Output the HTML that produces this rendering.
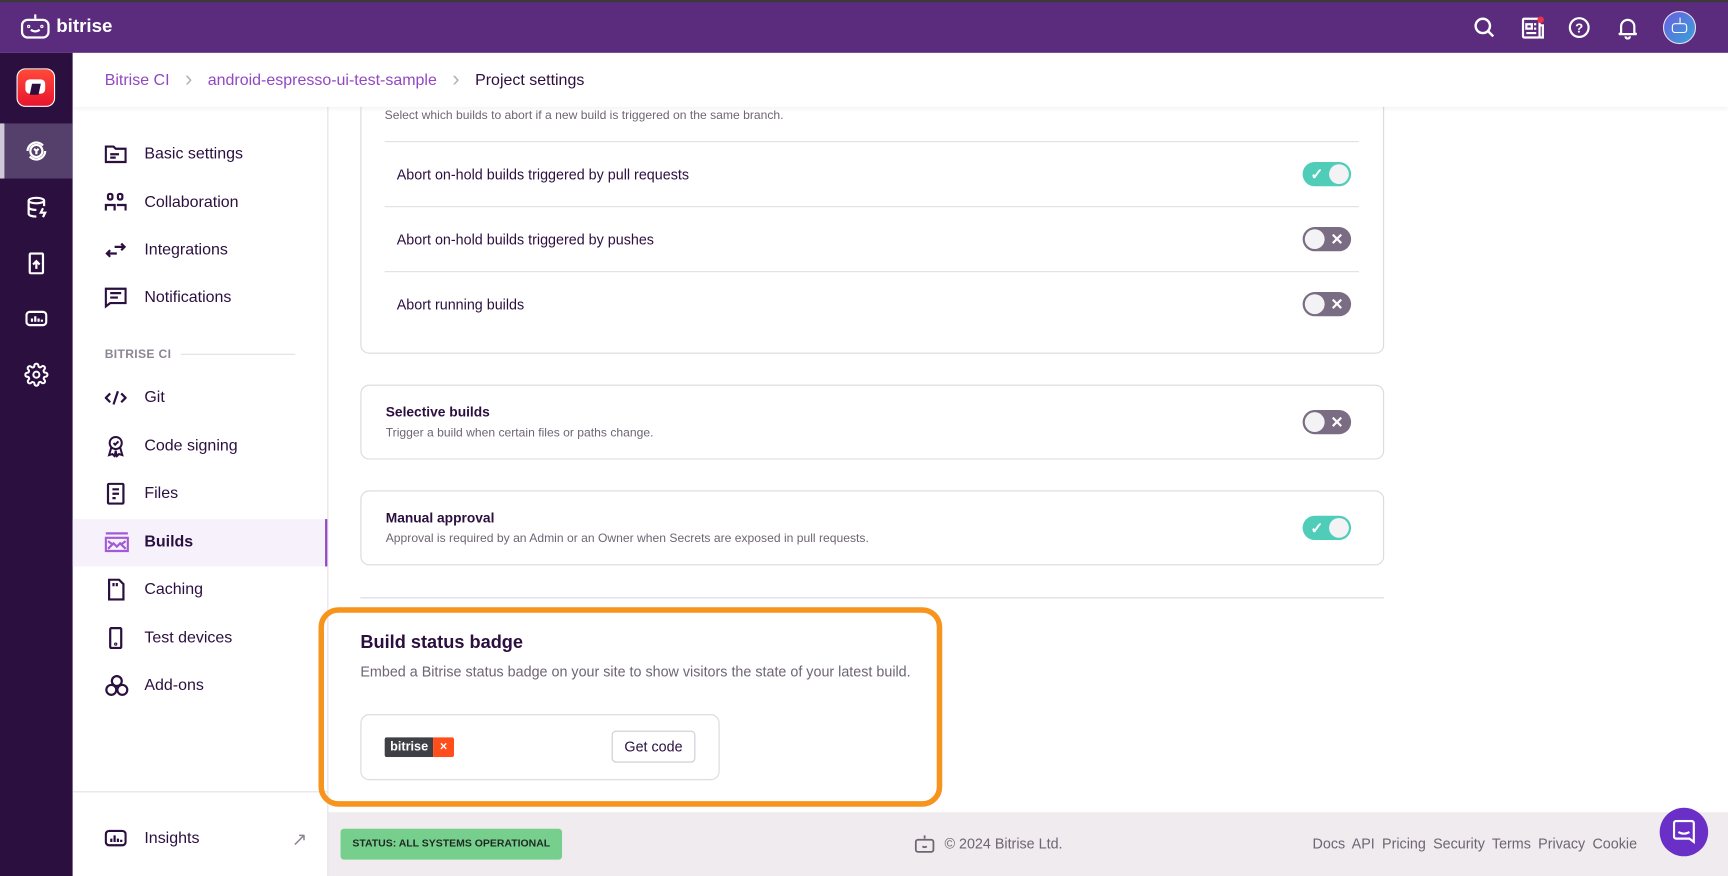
<!DOCTYPE html>
<html><head><meta charset="utf-8"><style>
*{box-sizing:border-box;margin:0;padding:0}
html,body{width:1728px;height:876px;overflow:hidden;background:#fff}
#w{position:absolute;left:0;top:0;width:1568px;height:795px;transform:scale(1.10204);transform-origin:0 0;font-family:"Liberation Sans",sans-serif;color:#2b0f3f}
.a{position:absolute}
.top{left:0;top:0;width:1568px;height:48px;background:#5b2b7e;border-top:2px solid #3a3a3a}
.rail{left:0;top:48px;width:66px;height:747px;background:#2b0f3f}
.crumb{left:66px;top:48px;width:1502px;height:49px;background:#fff;box-shadow:0 2px 4px rgba(0,0,0,.06);font-size:14.5px;line-height:49px;padding-left:29px;z-index:2}
.side{left:66px;top:97px;width:232px;height:698px;border-right:1px solid #e4e0e6;background:#fff}
.it{position:absolute;left:0;width:231px;height:43px;font-size:14.5px;line-height:43px;padding-left:65px;color:#2b0f3f}
.it svg{position:absolute;left:29px;top:11px}
.card{position:absolute;left:327px;width:929px;border:1px solid #dcd8de;border-radius:8px;background:#fff}
.row{position:absolute;left:349px;width:884px;height:59px;border-top:1px solid #e2dfe4;font-size:13px;line-height:59px;padding-left:11px}
.tg{position:absolute;width:44px;height:22px;border-radius:11px}
.on{background:#4fcdb9}.off{background:#7a6c82}
.tg i{position:absolute;top:2px;width:18px;height:18px;border-radius:50%;background:#f3f2f4}
.on i{right:2px}.off i{left:2px}
.tg b{position:absolute;top:0;color:#fff;font-size:14px;line-height:22px;font-weight:bold}
.on b{left:7px}.off b{right:7px}
.ct{position:absolute;left:22px;font-size:12.5px;font-weight:bold}
.cd{position:absolute;left:22px;font-size:11px;color:#6e6573}
.sep{color:#b5b0b8;margin:0 14px;font-size:20px;vertical-align:-1px}
</style></head><body><div id="w">
<div class="a top"></div>
<svg class="a" style="left:18px;top:12px" width="28" height="24" viewBox="0 0 28 24" fill="none" stroke="#fff" stroke-width="2"><rect x="2" y="6" width="24" height="16" rx="5"/><line x1="14" y1="1" x2="14" y2="5"/><path d="M10 15q4 3 8 0" /><circle cx="8" cy="12" r=".5"/><circle cx="20" cy="12" r=".5"/></svg>
<div class="a" style="left:51px;top:14px;color:#fff;font-weight:bold;font-size:17px">bitrise</div>
<svg class="a" style="left:1337px;top:15px" width="20" height="20" viewBox="0 0 20 20" fill="none" stroke="#fff" stroke-width="2.2"><circle cx="8.5" cy="8.5" r="6.5"/><line x1="13.5" y1="13.5" x2="18" y2="18"/></svg>
<svg class="a" style="left:1380px;top:14px" width="22" height="22" viewBox="0 0 22 22" fill="none" stroke="#fff" stroke-width="2"><rect x="2" y="3" width="15" height="17" rx="1"/><path d="M17 9h3v11h-3M5 8h5v4H5zM12 8h2M12 12h2M5 16h9"/><circle cx="18" cy="4" r="3" fill="#e8334a" stroke="none"/></svg>
<svg class="a" style="left:1423px;top:15px" width="20" height="20" viewBox="0 0 20 20" fill="none" stroke="#fff" stroke-width="2"><circle cx="10" cy="10" r="8.5"/><text x="10" y="14.5" text-anchor="middle" fill="#fff" stroke="none" font-size="12" font-weight="bold" font-family="Liberation Sans">?</text></svg>
<svg class="a" style="left:1467px;top:14px" width="20" height="22" viewBox="0 0 20 22" fill="none" stroke="#fff" stroke-width="2"><path d="M4 16V10a6 6 0 0 1 12 0v6l2 1H2z"/><path d="M8 19a2 2 0 0 0 4 0"/></svg>
<div class="a" style="left:1509px;top:10px;width:30px;height:30px;border-radius:50%;background:linear-gradient(135deg,#6a5ee0,#38a3d8);border:1.5px solid #e6e0f0"><div style="position:absolute;left:7px;top:10px;width:14px;height:9px;border:1.5px solid #fff;border-radius:3px"></div><div style="position:absolute;left:13.5px;top:5px;width:1.5px;height:5px;background:#fff"></div></div>
<div class="a rail"></div>
<div class="a" style="left:15px;top:62px;width:35px;height:35px;border-radius:8px;background:linear-gradient(#ff4a3a,#e8152e);border:1.5px solid #fff"><div style="position:absolute;left:7px;top:9px;width:18px;height:13px;background:#fff;border-radius:4px"></div><div style="position:absolute;left:12px;top:13px;width:8px;height:10px;background:#2b0f3f;transform:skewX(-12deg)"></div></div>
<div class="a" style="left:0;top:112px;width:66px;height:50px;background:#54406a;border-left:4px solid #d0c8d8"></div>
<svg class="a" style="left:23px;top:127px" width="20" height="20" viewBox="0 0 20 20" fill="none" stroke="#fff" stroke-width="2"><circle cx="10" cy="10" r="5.5"/><path d="M2 10a8 8 0 0 1 14-5M18 10a8 8 0 0 1-14 5M8 8l2 2 2-2M10 10v3"/></svg>
<svg class="a" style="left:24px;top:178px" width="20" height="20" viewBox="0 0 20 20" fill="none" stroke="#fff" stroke-width="2"><ellipse cx="9" cy="4" rx="7" ry="2.5"/><path d="M2 4v12c0 1.5 3 2.5 7 2.5M16 4v5M2 10c0 1.5 3 2.5 7 2.5"/><path d="M15 11l-2 4h4l-2 4" /></svg>
<svg class="a" style="left:25px;top:229px" width="16" height="20" viewBox="0 0 16 20" fill="none" stroke="#fff" stroke-width="2"><rect x="2" y="1" width="12" height="18" rx="1"/><path d="M8 15V8M5 11l3-3 3 3"/></svg>
<svg class="a" style="left:23px;top:281px" width="20" height="16" viewBox="0 0 20 16" fill="none" stroke="#fff" stroke-width="2"><rect x="1" y="2" width="18" height="12" rx="3"/><path d="M6 11V8M9 11V6M12 11V8M15 11V9"/></svg>
<svg class="a" style="left:22px;top:329px" width="22" height="22" viewBox="0 0 24 24" fill="none" stroke="#fff" stroke-width="2"><circle cx="12" cy="12" r="3"/><path d="M19.4 15a1.7 1.7 0 0 0 .3 1.8l.1.1a2 2 0 1 1-2.8 2.8l-.1-.1a1.7 1.7 0 0 0-1.8-.3 1.7 1.7 0 0 0-1 1.5V21a2 2 0 1 1-4 0v-.1a1.7 1.7 0 0 0-1.1-1.5 1.7 1.7 0 0 0-1.8.3l-.1.1a2 2 0 1 1-2.8-2.8l.1-.1a1.7 1.7 0 0 0 .3-1.8 1.7 1.7 0 0 0-1.5-1H3a2 2 0 1 1 0-4h.1a1.7 1.7 0 0 0 1.5-1.1 1.7 1.7 0 0 0-.3-1.8l-.1-.1a2 2 0 1 1 2.8-2.8l.1.1a1.7 1.7 0 0 0 1.8.3H9a1.7 1.7 0 0 0 1-1.5V3a2 2 0 1 1 4 0v.1a1.7 1.7 0 0 0 1 1.5 1.7 1.7 0 0 0 1.8-.3l.1-.1a2 2 0 1 1 2.8 2.8l-.1.1a1.7 1.7 0 0 0-.3 1.8V9a1.7 1.7 0 0 0 1.5 1H21a2 2 0 1 1 0 4h-.1a1.7 1.7 0 0 0-1.5 1z"/></svg>
<div class="a crumb"><span style="color:#9247c2">Bitrise CI</span><span class="sep">›</span><span style="color:#9247c2">android-espresso-ui-test-sample</span><span class="sep">›</span><span style="color:#2b0f3f">Project settings</span></div>
<div class="a side">
<div class="it" style="top:22px"><svg width="20" height="20" viewBox="0 0 20 20" fill="none" stroke="#2b0f3f" stroke-width="2"><path d="M1 3h7l2 2h9v12H1z M5 10h8M5 13h5"/></svg>Basic settings</div>
<div class="it" style="top:66px"><svg width="20" height="20" viewBox="0 0 20 20" fill="none" stroke="#2b0f3f" stroke-width="2"><rect x="3" y="2" width="4" height="5" rx="1.5"/><rect x="12" y="2" width="4" height="5" rx="1.5"/><path d="M1 17v-5h8v5M11 12h8v5"/></svg>Collaboration</div>
<div class="it" style="top:109px"><svg width="20" height="20" viewBox="0 0 20 20" fill="none" stroke="#2b0f3f" stroke-width="2"><path d="M9 7h9M15 4l3 3-3 3M11 13H2M5 10l-3 3 3 3"/></svg>Integrations</div>
<div class="it" style="top:152px"><svg width="20" height="20" viewBox="0 0 20 20" fill="none" stroke="#2b0f3f" stroke-width="2"><path d="M1 2h18v13H5l-4 3z M5 6h10M5 10h7"/></svg>Notifications</div>
<div class="a" style="left:29px;top:219px;font-size:11px;font-weight:bold;color:#8e8594;letter-spacing:.3px">BITRISE CI</div>
<div class="a" style="left:98px;top:224px;width:104px;height:1px;background:#e2dfe4"></div>
<div class="it" style="top:243px"><svg width="20" height="20" viewBox="0 0 20 20" fill="none" stroke="#2b0f3f" stroke-width="2"><path d="M5 6l-4 4 4 4M15 6l4 4-4 4M12 4l-4 12"/></svg>Git</div>
<div class="it" style="top:287px"><svg width="20" height="20" viewBox="0 0 20 20" fill="none" stroke="#2b0f3f" stroke-width="1.8"><circle cx="10" cy="7" r="5.5"/><path d="M8 7l1.5 1.5L12.5 5.5M6 11l-2 7 3-1 2 2 1-5 1 5 2-2 3 1-2-7"/></svg>Code signing</div>
<div class="it" style="top:330px"><svg width="20" height="20" viewBox="0 0 20 20" fill="none" stroke="#2b0f3f" stroke-width="2"><rect x="3" y="1" width="14" height="18" rx="1"/><path d="M7 6h6M7 10h6M7 14h3"/></svg>Files</div>
<div class="it" style="top:374px;background:#f7f1fc;font-weight:bold;border-right:2px solid #9247c2"><svg width="22" height="20" viewBox="0 0 22 20" fill="none" stroke="#a05bd6" stroke-width="2"><path d="M1 2h20M1 6h20v12H1zM3 16l5-5 3 3 3-3 5 5M3 9l4 3M19 9l-4 3"/></svg>Builds</div>
<div class="it" style="top:417px"><svg width="20" height="20" viewBox="0 0 20 20" fill="none" stroke="#2b0f3f" stroke-width="2"><path d="M4 1h9l4 4v14H4z M8 4v3M11 4v3"/></svg>Caching</div>
<div class="it" style="top:461px"><svg width="20" height="20" viewBox="0 0 20 20" fill="none" stroke="#2b0f3f" stroke-width="2"><rect x="5" y="1" width="10" height="18" rx="1"/><circle cx="10" cy="15.5" r=".5"/></svg>Test devices</div>
<div class="it" style="top:504px"><svg width="22" height="20" viewBox="0 0 22 20" fill="none" stroke="#2b0f3f" stroke-width="2"><circle cx="11" cy="6" r="4.5"/><circle cx="6" cy="14" r="4.5"/><circle cx="16" cy="14" r="4.5"/></svg>Add-ons</div>
<div class="a" style="left:0;top:621px;width:231px;height:1px;background:#e2dfe4"></div>
<div class="it" style="top:643px"><svg width="20" height="20" viewBox="0 0 20 20" fill="none" stroke="#2b0f3f" stroke-width="2"><rect x="1" y="3" width="18" height="13" rx="3"/><path d="M6 13v-3M9 13V7M12 13v-3M15 13v-2"/></svg>Insights<span style="position:absolute;right:18px;color:#8e8594;font-size:17px">&#8599;</span></div>
</div>
<div class="card" style="top:60px;height:261px"></div>
<div class="a" style="left:349px;top:99px;font-size:11px;color:#6e6573">Select which builds to abort if a new build is triggered on the same branch.</div>
<div class="row" style="top:128px">Abort on-hold builds triggered by pull requests</div>
<div class="row" style="top:187px">Abort on-hold builds triggered by pushes</div>
<div class="row" style="top:246px">Abort running builds</div>
<div class="tg on" style="left:1182px;top:147px"><b>✓</b><i></i></div>
<div class="tg off" style="left:1182px;top:206px"><i></i><b>✕</b></div>
<div class="tg off" style="left:1182px;top:265px"><i></i><b>✕</b></div>
<div class="card" style="top:349px;height:68px"><div class="ct" style="top:17px">Selective builds</div><div class="cd" style="top:37px">Trigger a build when certain files or paths change.</div></div>
<div class="tg off" style="left:1182px;top:372px"><i></i><b>✕</b></div>
<div class="card" style="top:445px;height:68px"><div class="ct" style="top:17px">Manual approval</div><div class="cd" style="top:37px">Approval is required by an Admin or an Owner when Secrets are exposed in pull requests.</div></div>
<div class="tg on" style="left:1182px;top:468px"><b>✓</b><i></i></div>
<div class="a" style="left:327px;top:542px;width:929px;height:1px;background:#dcd8de"></div>
<div class="a" style="left:289px;top:551px;width:566px;height:181px;border:5px solid #f7941d;border-radius:18px"></div>
<div class="a" style="left:327px;top:574px;font-size:16.5px;font-weight:bold">Build status badge</div>
<div class="a" style="left:327px;top:602px;font-size:13px;color:#6e6573">Embed a Bitrise status badge on your site to show visitors the state of your latest build.</div>
<div class="a" style="left:327px;top:648px;width:326px;height:60px;border:1px solid #dcd8de;border-radius:8px"></div>
<div class="a" style="left:349px;top:669px;width:63px;height:18px;border-radius:2px;overflow:hidden;font-size:11.5px;font-weight:bold;color:#fff;line-height:18px"><span style="display:inline-block;width:44px;background:#3f3f46;padding-left:5px">bitrise</span><span style="position:absolute;right:0;top:0;width:19px;text-align:center;background:#ff4d1c">×</span></div>
<div class="a" style="left:555px;top:663px;width:76px;height:29px;border:1px solid #cfcad3;border-radius:4px;font-size:13px;line-height:27px;text-align:center">Get code</div>
<div class="a" style="left:298px;top:737px;width:1270px;height:58px;background:#efebef"></div>
<div class="a" style="left:309px;top:752px;width:201px;height:28px;background:#77cf8e;border-radius:3px;font-size:9.5px;font-weight:bold;line-height:28px;text-align:center;color:#1d2a20">STATUS: ALL SYSTEMS OPERATIONAL</div>
<svg class="a" style="left:830px;top:757px" width="18" height="17" viewBox="0 0 18 17" fill="none" stroke="#6e6573" stroke-width="1.6"><rect x="1" y="5" width="16" height="11" rx="2"/><path d="M9 1v3M7 11q2 1.5 4 0"/></svg>
<div class="a" style="left:857px;top:758px;font-size:13px;color:#6e6573">© 2024 Bitrise Ltd.</div>
<div class="a" style="left:1191px;top:758px;font-size:13px;color:#6e6573;word-spacing:3px">Docs API Pricing Security Terms Privacy Cookie</div>
<div class="a" style="left:1506px;top:733px;width:44px;height:44px;border-radius:50%;background:#6a2fc6"><svg style="position:absolute;left:12px;top:11px" width="20" height="22" viewBox="0 0 20 22" fill="none" stroke="#fff" stroke-width="2"><path d="M3 1h14a2 2 0 0 1 2 2v17l-4-3H3a2 2 0 0 1-2-2V3a2 2 0 0 1 2-2z"/><path d="M5 11q5 3 10 0"/></svg></div>
</div></body></html>
